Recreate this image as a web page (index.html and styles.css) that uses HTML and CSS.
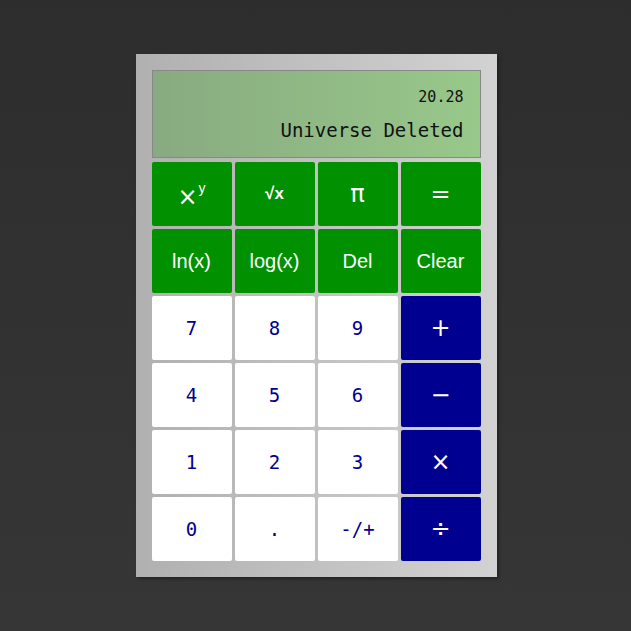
FILE: index.html
```html
<!DOCTYPE html>
<html>
<head>
<meta charset="utf-8">
<link rel="stylesheet" href="styles.css">
</head>
<body>
<div class="page">
  <div class="calc">
    <div class="display">
      <div class="expr">20.28</div>
      <div class="result">Universe Deleted</div>
    </div>
    <div class="keys">
      <button class="key fn"><span class="pow">×</span><sup>y</sup></button>
      <button class="key fn small">√x</button>
      <button class="key fn big">π</button>
      <button class="key fn big">=</button>
      <button class="key fn">ln(x)</button>
      <button class="key fn">log(x)</button>
      <button class="key fn">Del</button>
      <button class="key fn">Clear</button>
      <button class="key num">7</button>
      <button class="key num">8</button>
      <button class="key num">9</button>
      <button class="key op">+</button>
      <button class="key num">4</button>
      <button class="key num">5</button>
      <button class="key num">6</button>
      <button class="key op">−</button>
      <button class="key num">1</button>
      <button class="key num">2</button>
      <button class="key num">3</button>
      <button class="key op">×</button>
      <button class="key num">0</button>
      <button class="key num">.</button>
      <button class="key num">-/+</button>
      <button class="key op">÷</button>
    </div>
  </div>
</div>
</body>
</html>
```
FILE: styles.css
```css
html, body {
  margin: 0;
  padding: 0;
  height: 100%;
}
body {
  background: linear-gradient(180deg, #2d2d2d 0%, #363636 100%);
}
.page {
  display: flex;
  justify-content: center;
  padding-top: 54px;
  padding-left: 1px;
}
.calc {
  width: 329px;
  padding: 16px;
  background: linear-gradient(90deg, #b0b0b0 0%, #d2d2d2 100%);
  box-shadow: 2px 2px 3px rgba(0,0,0,0.35);
  display: flex;
  flex-direction: column;
  gap: 4px;
}
.display {
  height: 86px;
  border: 1px solid #888;
  background: linear-gradient(90deg, #88aa80 0%, #98c88a 100%);
  display: flex;
  flex-direction: column;
  align-items: flex-end;
  padding-right: 16px;
  font-family: "DejaVu Sans Mono", monospace;
  color: #111;
}
.expr {
  font-size: 15px;
  margin-top: 17px;
  line-height: 18px;
}
.result {
  font-size: 19px;
  margin-top: 12px;
  line-height: 24px;
}
.keys {
  display: grid;
  grid-template-columns: repeat(4, 80px);
  grid-auto-rows: 64px;
  gap: 3px;
}
.key {
  border: none;
  border-radius: 2px;
  padding: 0;
  margin: 0;
  font-size: 20px;
  display: flex;
  align-items: center;
  justify-content: center;
}
.fn {
  background: #009000;
  color: #fff;
  font-family: "Liberation Sans", Arial, sans-serif;
}
.fn .pow {
  font-family: "DejaVu Sans", sans-serif;
  font-size: 24px;
  line-height: 1;
  position: relative;
  top: 3px;
}
.fn sup {
  font-size: 14px;
  position: relative;
  top: -6px;
  margin-left: 1px;
}
.fn.small {
  font-size: 17px;
  font-weight: bold;
}
.fn.big {
  font-family: "DejaVu Sans", sans-serif;
  font-size: 24px;
}
.num {
  background: #fff;
  color: #000090;
  font-family: "DejaVu Sans Mono", monospace;
  font-size: 19px;
}
.op {
  background: #000090;
  color: #fff;
  font-family: "DejaVu Sans", sans-serif;
  font-size: 24px;
}
```
